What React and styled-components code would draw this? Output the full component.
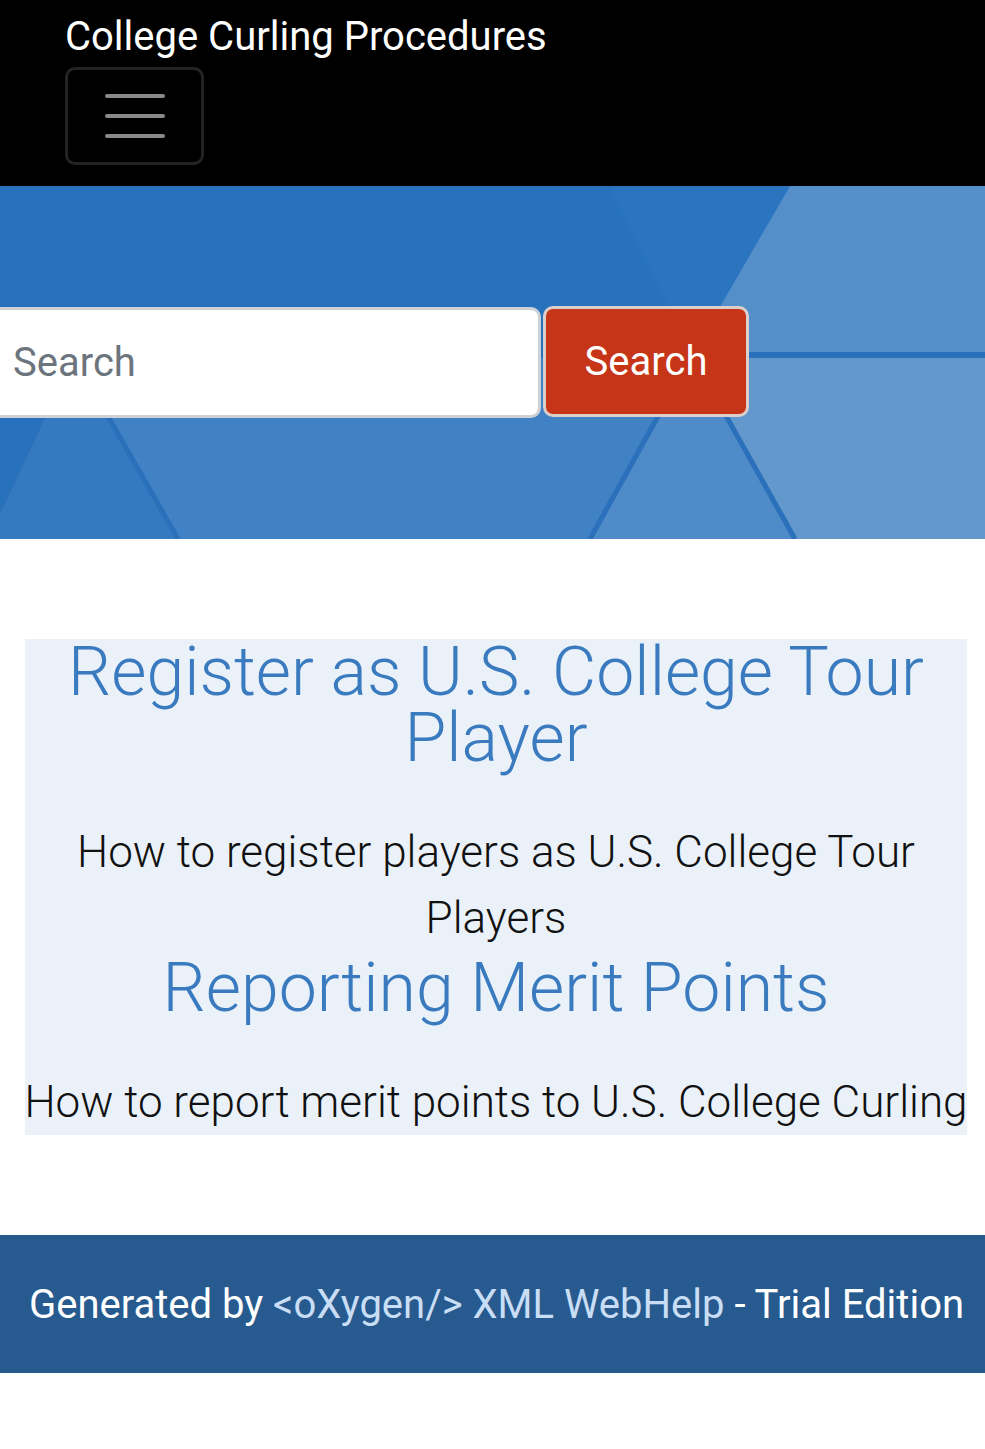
import React from 'react';
import styled, { createGlobalStyle } from 'styled-components';

const GlobalStyle = createGlobalStyle`
  html, body {
    margin: 0;
    padding: 0;
    background: #fff;
    font-family: Roboto, "Liberation Sans", Arial, sans-serif;
  }
  * {
    box-sizing: border-box;
  }
`;

const Navbar = styled.header`
  background: #000;
  height: 186px;
  padding: 14px 0 0 65px;
`;

const Brand = styled.div`
  color: #fff;
  font-size: 40px;
  line-height: 46px;
  font-weight: 400;
`;

const Toggler = styled.button`
  margin-top: 7px;
  width: 139px;
  height: 98px;
  background: transparent;
  border: 3px solid #232323;
  border-radius: 10px;
  display: flex;
  flex-direction: column;
  align-items: center;
  justify-content: center;
  gap: 16px;
  padding: 0;
`;

const Bar = styled.span`
  display: block;
  width: 60px;
  height: 4px;
  border-radius: 2px;
  background: #898989;
`;

const Hero = styled.section`
  position: relative;
  height: 353px;
  background: #2872bd;
  overflow: hidden;
  display: flex;
  align-items: center;
`;

const Backdrop = styled.svg`
  position: absolute;
  inset: 0;
  width: 100%;
  height: 100%;
`;

const SearchForm = styled.form`
  position: relative;
  display: flex;
  align-items: center;
  gap: 2px;
  margin-left: -40px;
`;

const SearchInput = styled.input`
  width: 581px;
  height: 111px;
  border: 3px solid #cdd1d6;
  border-radius: 10px;
  background: #fff;
  padding: 0 0 0 50px;
  font-family: Roboto, "Liberation Sans", Arial, sans-serif;
  font-size: 40px;
  color: #212529;
  outline: none;
  &::placeholder {
    color: #6c757d;
  }
`;

const SearchButton = styled.button`
  width: 206px;
  height: 111px;
  margin-top: -2px;
  border: 3px solid #dccfcb;
  border-radius: 10px;
  background: #c63518;
  color: #fff;
  font-family: Roboto, "Liberation Sans", Arial, sans-serif;
  font-size: 40px;
  padding: 0;
`;

const Topics = styled.main`
  margin: 100px 18px 100px 25px;
  background: #ebf1f9;
  text-align: center;
`;

const TopicTitle = styled.h2`
  margin: 4px 0 48px;
  font-size: 68px;
  line-height: 66px;
  font-weight: 300;
  color: #3a7bbf;
`;

const TopicDesc = styled.p`
  margin: 0 -8px;
  font-size: 44px;
  line-height: 66px;
  font-weight: 300;
  color: #111;
`;

const Footer = styled.footer`
  height: 138px;
  padding-left: 8px;
  background: #275b8f;
  display: flex;
  align-items: center;
  justify-content: center;
  color: #fff;
  font-size: 40px;
  white-space: nowrap;
`;

const FooterLink = styled.span`
  color: #c9def5;
`;

const topics = [
  {
    title: 'Register as U.S. College Tour Player',
    desc: 'How to register players as U.S. College Tour Players',
  },
  {
    title: 'Reporting Merit Points',
    desc: 'How to report merit points to U.S. College Curling',
  },
];

const HeroPattern = () => (
  <Backdrop viewBox="0 0 985 353" preserveAspectRatio="none">
    <polygon points="610,0 790,0 692,169" fill="#2a74c0" />
    <polygon points="790,0 985,0 985,169 692,169" fill="#548fca" />
    <polygon points="73,169 692,169 590,353 178,353" fill="#4182c4" />
    <polygon points="73,169 178,353 0,353 0,325" fill="#3579c0" />
    <polygon points="692,169 795,353 590,353" fill="#4f8bc8" />
    <polygon points="692,169 985,169 985,353 795,353" fill="#6398cd" />
    <g stroke="#2a70bb" strokeWidth="5">
      <line x1="692" y1="169" x2="590" y2="353" />
      <line x1="692" y1="169" x2="795" y2="353" />
      <line x1="73" y1="169" x2="178" y2="353" />
      <line x1="73" y1="169" x2="0" y2="325" strokeWidth="3" />
      <line x1="0" y1="169" x2="985" y2="169" strokeWidth="6" />
    </g>
  </Backdrop>
);

const App = () => (
  <>
    <GlobalStyle />
    <Navbar>
      <Brand>College Curling Procedures</Brand>
      <Toggler aria-label="Menu">
        <Bar />
        <Bar />
        <Bar />
      </Toggler>
    </Navbar>
    <Hero>
      <HeroPattern />
      <SearchForm onSubmit={(e) => e.preventDefault()}>
        <SearchInput type="text" placeholder="Search" />
        <SearchButton type="submit">Search</SearchButton>
      </SearchForm>
    </Hero>
    <Topics>
      {topics.map((t) => (
        <React.Fragment key={t.title}>
          <TopicTitle>{t.title}</TopicTitle>
          <TopicDesc>{t.desc}</TopicDesc>
        </React.Fragment>
      ))}
    </Topics>
    <Footer>
      Generated by&nbsp;<FooterLink>&lt;oXygen/&gt; XML WebHelp</FooterLink>&nbsp;- Trial Edition
    </Footer>
  </>
);

export default App;
